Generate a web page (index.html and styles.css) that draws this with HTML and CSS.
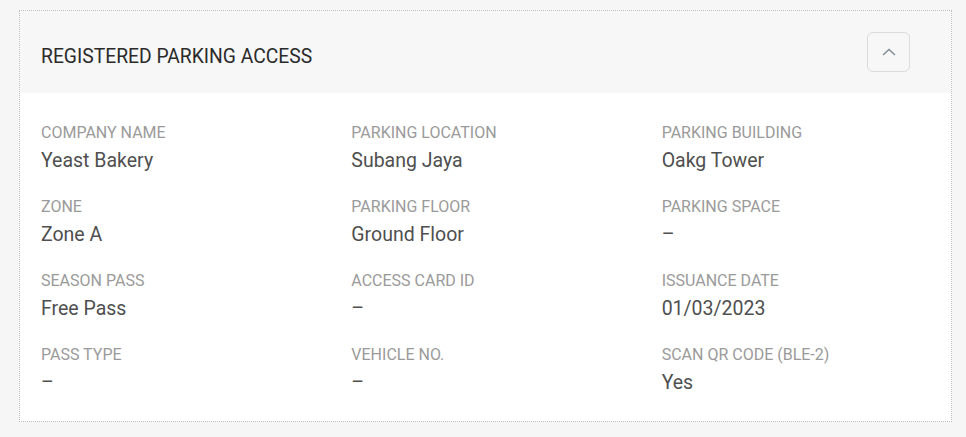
FILE: index.html
```html
<!DOCTYPE html>
<html lang="en">
<head>
<meta charset="utf-8">
<title>Registered Parking Access</title>
<link rel="stylesheet" href="styles.css">
</head>
<body>
<section class="card">
  <header class="card-header">
    <h2 class="card-title">REGISTERED PARKING ACCESS</h2>
    <button class="toggle" type="button" aria-label="Collapse">
      <svg width="14" height="8" viewBox="0 0 14 8" aria-hidden="true"><polyline points="1,7 7,1.5 13,7" fill="none" stroke="#7f8a94" stroke-width="1.4"/></svg>
    </button>
  </header>
  <div class="card-body">
    <div class="field"><div class="label">COMPANY NAME</div><div class="value">Yeast Bakery</div></div>
    <div class="field"><div class="label">PARKING LOCATION</div><div class="value">Subang Jaya</div></div>
    <div class="field"><div class="label">PARKING BUILDING</div><div class="value">Oakg Tower</div></div>
    <div class="field"><div class="label">ZONE</div><div class="value">Zone A</div></div>
    <div class="field"><div class="label">PARKING FLOOR</div><div class="value">Ground Floor</div></div>
    <div class="field"><div class="label">PARKING SPACE</div><div class="value">–</div></div>
    <div class="field"><div class="label">SEASON PASS</div><div class="value">Free Pass</div></div>
    <div class="field"><div class="label">ACCESS CARD ID</div><div class="value">–</div></div>
    <div class="field"><div class="label">ISSUANCE DATE</div><div class="value">01/03/2023</div></div>
    <div class="field"><div class="label">PASS TYPE</div><div class="value">–</div></div>
    <div class="field"><div class="label">VEHICLE NO.</div><div class="value">–</div></div>
    <div class="field"><div class="label">SCAN QR CODE (BLE-2)</div><div class="value">Yes</div></div>
  </div>
</section>
</body>
</html>
```

FILE: styles.css
```css
html, body {
  margin: 0;
  padding: 0;
}
body {
  background: #f6f6f6;
  font-family: Roboto, "Liberation Sans", sans-serif;
  padding: 10px 14px 15px 19px;
}
.card {
  border: 1px dotted #bdbdbd;
  background: #ffffff;
}
.card-header {
  height: 82px;
  background: #f7f7f7;
  display: flex;
  align-items: center;
  justify-content: space-between;
  padding: 0 41px 0 21px;
}
.card-title {
  margin: 10px 0 0 0;
  font-size: 19.3px;
  line-height: 24px;
  font-weight: 400;
  color: #2b2b2b;
}
.toggle {
  width: 43px;
  height: 40px;
  border: 1px solid #dcdcdc;
  border-radius: 6px;
  background: #f7f7f7;
  display: flex;
  align-items: center;
  justify-content: center;
  padding: 0;
}
.toggle svg {
  display: block;
}
.card-body {
  display: grid;
  grid-template-columns: repeat(3, 1fr);
  column-gap: 42px;
  row-gap: 24px;
  padding: 30px 21px 26px 21px;
}
.label {
  font-size: 16px;
  line-height: 20px;
  color: #9a9a9a;
}
.value {
  margin-top: 6px;
  font-size: 19.5px;
  line-height: 24px;
  color: #4f4f4f;
}
```
